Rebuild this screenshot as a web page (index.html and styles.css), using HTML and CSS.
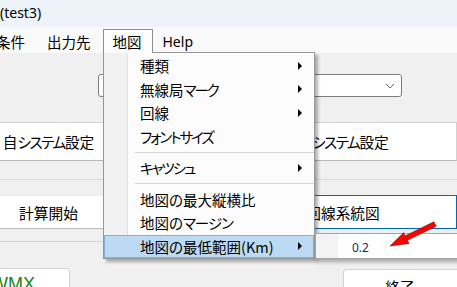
FILE: index.html
```html
<!DOCTYPE html>
<html lang="ja">

<head>
    <meta charset="UTF-8">
    <title>(test3)</title>
    <link rel="stylesheet" href="styles.css">
</head>

<body>
    <div class="window">
        <div class="titlebar"><span>(test3)</span></div>

        <div class="menubar">
            <span class="menu-item first">条件</span>
            <span class="menu-item">出力先</span>
            <span class="menu-item open">地図</span>
            <span class="menu-item latin">Help</span>
        </div>

        <div class="form-body">
            <div class="combo">
                <svg class="chevron" width="10" height="6" viewBox="0 0 10 6">
                    <polyline points="1,1 5,5 9,1" fill="none" stroke="#6b6b6b" stroke-width="1" />
                </svg>
            </div>

            <div class="btn-row row-settings">
                <button class="btn btn-left">自<span class="kana">システム</span>設定</button>
                <button class="btn btn-right">他<span class="kana">システム</span>設定</button>
            </div>

            <div class="rule"></div>

            <div class="btn-row row-run">
                <button class="btn btn-left">計算開始</button>
                <button class="btn btn-right focused">回線系統図</button>
            </div>

            <div class="panel-edge"></div>

            <div class="btn-row row-bottom">
                <button class="btn btn-wmx">WMX</button>
                <button class="btn btn-exit">終了</button>
            </div>
        </div>

        <!-- 地図 dropdown -->
        <div class="dropdown">
            <div class="dd-item"><span>種類</span><i class="sub-arrow"></i></div>
            <div class="dd-item"><span>無線局<span class="kana">マーク</span></span><i class="sub-arrow"></i></div>
            <div class="dd-item"><span>回線</span><i class="sub-arrow"></i></div>
            <div class="dd-item"><span class="kana">フォントサイズ</span></div>
            <div class="dd-sep"></div>
            <div class="dd-item"><span class="kana">キャツシュ</span><i class="sub-arrow"></i></div>
            <div class="dd-sep"></div>
            <div class="dd-item"><span>地図の最大縦横比</span></div>
            <div class="dd-item"><span>地図の<span class="kana tight">マージン</span></span></div>
            <div class="dd-item active"><span>地図の最低範囲(Km)</span><i class="sub-arrow"></i></div>
        </div>

        <div class="submenu">
            <div class="sub-textbox">0.2</div>
        </div>

        <svg class="annotation" width="457" height="287" viewBox="0 0 457 287">
            <polygon points="390,246 409,243.5 407.3,240.3 436.1,226.2 433.9,221.8 405.1,235.9 403.6,232.7"
                fill="#ff0000" stroke="#7a0000" stroke-width="0.6" stroke-linejoin="round" />
        </svg>
    </div>
</body>

</html>
```

FILE: styles.css
```css
* {
    margin: 0;
    padding: 0;
    box-sizing: border-box;
}

body {
    width: 457px;
    height: 287px;
    overflow: hidden;
    background: #f0f0f0;
    font-family: "Noto Sans CJK JP", "Noto Sans", sans-serif;
    font-feature-settings: "palt";
    color: #000;
}

.window {
    position: relative;
    width: 457px;
    height: 287px;
    overflow: hidden;
}

.titlebar {
    height: 27px;
    background: #eef3f9;
    display: flex;
    align-items: center;
    padding: 0 0 2px 0;
    font-family: "Noto Sans", sans-serif;
    font-size: 14px;
}

.menubar {
    height: 26px;
    background: #f9f9f9;
    display: flex;
    gap: 2px;
    padding-top: 2px;
    font-size: 14.5px;
}

.menu-item {
    height: 24px;
    padding: 0 9px;
    border: 1px solid transparent;
    display: flex;
    align-items: center;
}

.menu-item.first {
    margin-left: -14px;
}

.menu-item.latin {
    font-family: "Noto Sans", sans-serif;
    font-size: 14px;
    margin-left: -2px;
}

.menu-item.open {
    position: relative;
    z-index: 3;
    width: 50px;
    background: #fcfcfc;
    border-color: #8f8f8f;
    border-bottom: none;
}

.kana {
    letter-spacing: -2px;
}

.kana.tight {
    letter-spacing: -1px;
}

.form-body {
    padding-top: 21px;
}

.combo {
    margin-left: 98px;
    width: 304px;
    height: 23px;
    background: #fff;
    border: 1px solid #7d7d7d;
    border-radius: 3px;
    display: flex;
    align-items: center;
    justify-content: flex-end;
    padding-right: 6px;
}

.btn-row {
    display: flex;
    justify-content: space-between;
}

.btn {
    font-family: inherit;
    font-feature-settings: "palt";
    font-size: 14.7px;
    color: #000;
    background: #fff;
    border: 1px solid #d3d3d3;
    border-bottom-color: #b9b9b9;
}

.row-settings {
    margin-top: 25px;
}

.row-settings .btn {
    height: 39px;
}

.row-settings .kana {
    letter-spacing: -1.5px;
}

.btn-left {
    width: 121px;
    margin-left: -12px;
}

.btn-right {
    width: 228px;
}

.rule {
    margin-top: 18px;
    height: 1px;
    background: #dadada;
}

.row-run {
    margin-top: 15px;
}

.row-run .btn {
    height: 34px;
}

.row-run .btn-left {
    border-top-color: #ececec;
}

.btn.focused {
    border-color: #0067c0;
}

.panel-edge {
    margin-top: 12px;
    width: 110px;
    height: 1px;
    background: #d8d8d8;
}

.row-bottom {
    margin-top: 26px;
}

.btn-wmx {
    width: 90px;
    height: 30px;
    margin-left: -20px;
    border-radius: 4px;
    padding: 2px 0 0 10px;
    font-family: "Liberation Sans", sans-serif;
    font-size: 18px;
    color: #168416;
    text-align: left;
}

.btn-exit {
    width: 128px;
    height: 34px;
    margin-right: -14px;
    margin-top: 1px;
    border-radius: 4px;
    padding-right: 14px;
}

/* dropdown menu */

.dropdown {
    position: absolute;
    z-index: 2;
    left: 103px;
    top: 52px;
    width: 212px;
    border: 1px solid #979797;
    padding-top: 1px;
    background: linear-gradient(to right, #f2f2f2 0 23px, #e2e2e2 23px 24px, #fcfcfc 24px);
    box-shadow: 3px 3px 3px rgba(0, 0, 0, 0.3);
    font-size: 14.5px;
}

.dd-item {
    height: 23.5px;
    padding: 0 11px 0 35px;
    border: 1px solid transparent;
    display: flex;
    align-items: center;
    justify-content: space-between;
}

.dd-item.active {
    background: #bcdaf4;
    border-color: #7fb2e6;
}

.sub-arrow {
    width: 0;
    height: 0;
    border-left: 4px solid #000;
    border-top: 4px solid transparent;
    border-bottom: 4px solid transparent;
}

.dd-sep {
    height: 8px;
    margin-left: 31px;
    display: flex;
    align-items: center;
}

.dd-sep::before {
    content: "";
    flex: 1;
    height: 1px;
    background: #d7d7d7;
}

.submenu {
    position: absolute;
    z-index: 2;
    left: 315px;
    top: 233px;
    width: 160px;
    height: 26px;
    border: 1px solid #a5a5a5;
    background: linear-gradient(to right, #f3f3f3 0 22px, #fff 22px);
    box-shadow: 2px 3px 4px rgba(0, 0, 0, 0.3);
    padding-left: 36px;
    display: flex;
    align-items: center;
}

.sub-textbox {
    font-family: "Noto Sans", sans-serif;
    font-size: 12px;
    color: #1e2a5a;
    padding-top: 2px;
}

.annotation {
    position: absolute;
    z-index: 5;
    left: 0;
    top: 0;
    pointer-events: none;
}
```
